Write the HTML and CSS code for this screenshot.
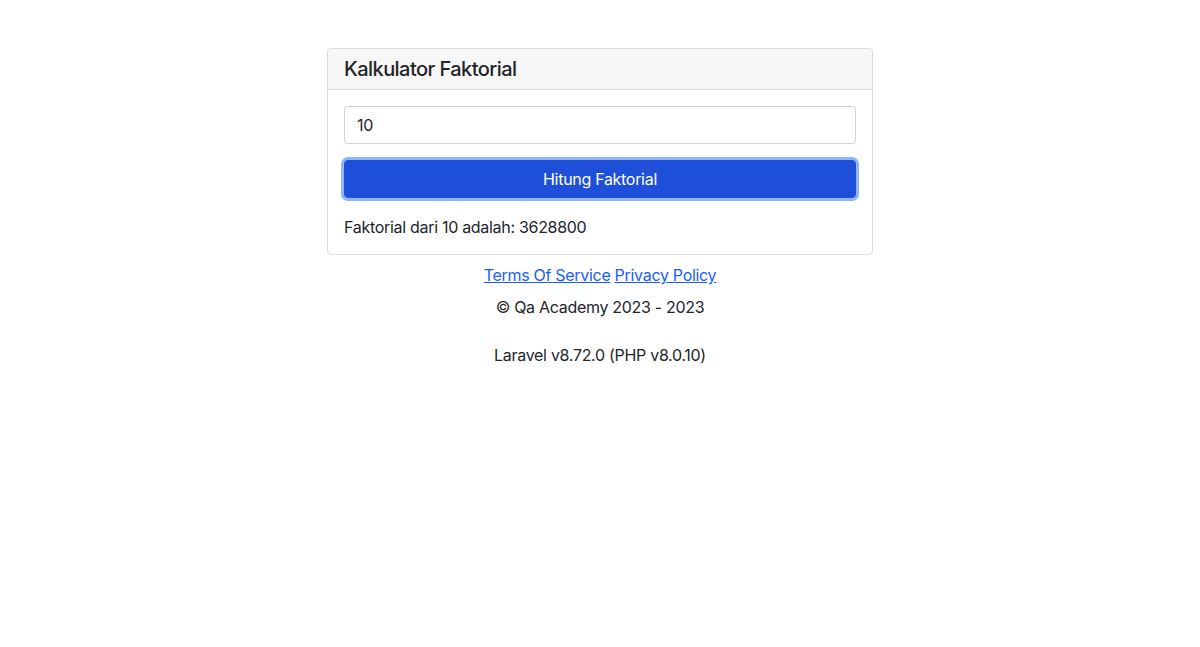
FILE: index.html
```html
<!DOCTYPE html>
<html lang="id">
<head>
<meta charset="utf-8">
<title>Kalkulator Faktorial</title>
<link rel="stylesheet" href="styles.css">
</head>
<body>
<main class="page">
  <section class="card">
    <header class="card-header">Kalkulator Faktorial</header>
    <div class="card-body">
      <input class="form-input" type="text" value="10">
      <button class="btn" type="button">Hitung Faktorial</button>
      <p class="result">Faktorial dari 10 adalah: 3628800</p>
    </div>
  </section>
  <footer class="footer">
    <div class="links"><a href="#">Terms Of Service</a> <a href="#">Privacy Policy</a></div>
    <p class="copy">© Qa Academy 2023 - 2023</p>
    <p class="version">Laravel v8.72.0 (PHP v8.0.10)</p>
  </footer>
</main>
</body>
</html>
```
FILE: styles.css
```css
html, body {
  margin: 0;
  padding: 0;
  background: #fff;
}
body {
  font-family: Inter, "Noto Sans", sans-serif;
  font-size: 16px;
  line-height: 24px;
  letter-spacing: -0.3px;
  color: #212529;
}
.page {
  display: flex;
  flex-direction: column;
  align-items: center;
  padding-top: 48px;
}
.card {
  width: 546px;
  box-sizing: border-box;
  border: 1px solid #dcdcdc;
  border-radius: 4px;
  overflow: hidden;
}
.card-header {
  background: #f7f7f7;
  border-bottom: 1px solid #dcdcdc;
  padding: 8px 16px;
  font-size: 20px;
  line-height: 24px;
  font-weight: 500;
  letter-spacing: -0.55px;
}
.card-body {
  padding: 16px 16px 15px;
  display: flex;
  flex-direction: column;
}
.form-input {
  box-sizing: border-box;
  height: 38px;
  border: 1px solid #ced4da;
  border-radius: 4px;
  padding: 6px 12px;
  font-family: inherit;
  font-size: 16px;
  letter-spacing: inherit;
  color: #212529;
  outline: none;
}
.btn {
  margin-top: 16px;
  height: 38px;
  border: 1px solid #1e4fd8;
  border-radius: 4px;
  background: #1e4fd8;
  color: #fff;
  font-family: inherit;
  font-size: 16px;
  letter-spacing: inherit;
  box-shadow: 0 0 0 3px #8fb4f9;
}
.result {
  margin: 17px 0 0;
}
.footer {
  margin-top: 8px;
  text-align: center;
}
.links a {
  color: #1a5cff;
  text-decoration: underline;
}
.copy {
  margin: 8px 0 0;
}
.version {
  margin: 24px 0 0;
}
```
